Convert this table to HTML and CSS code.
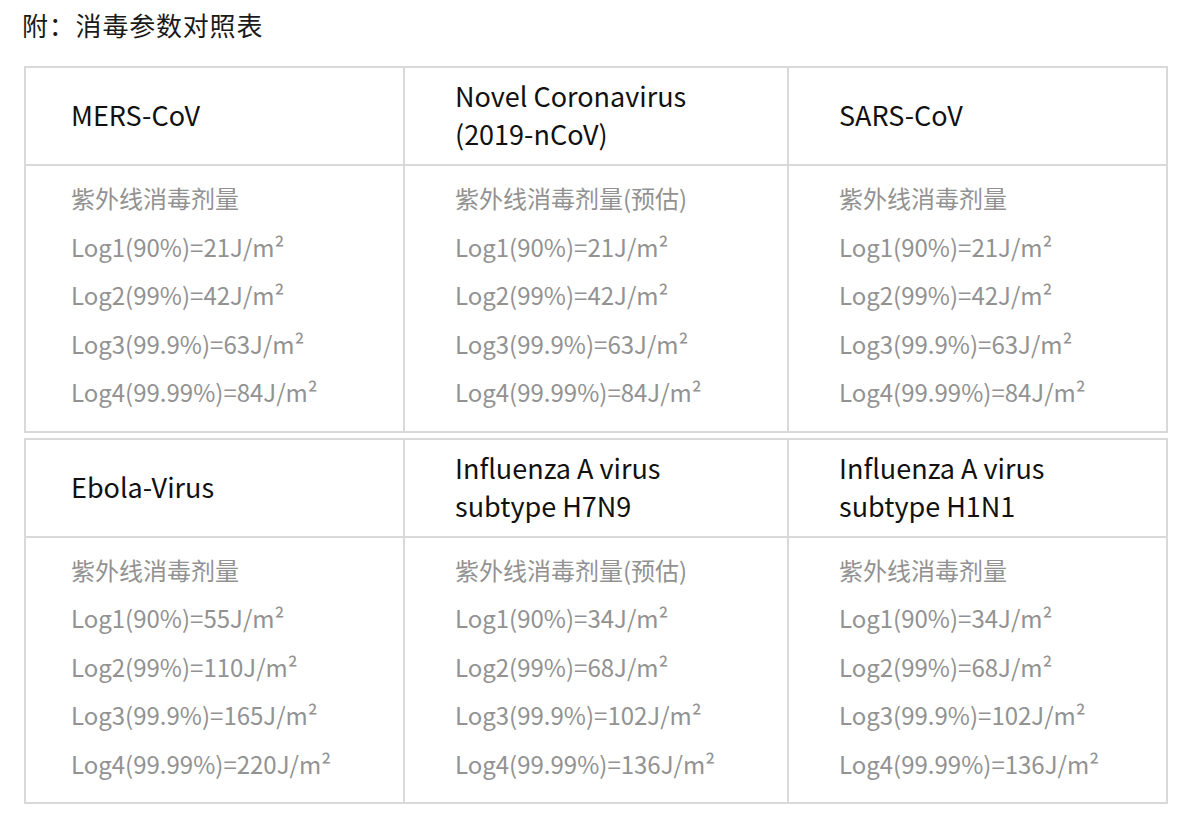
FILE: index.html
```html
<!DOCTYPE html>
<html lang="zh-CN">
<head>
<meta charset="utf-8">
<link rel="stylesheet" href="styles.css">
</head>
<body>
<h1 class="title">附：消毒参数对照表</h1>
<table class="grid">
  <colgroup><col class="c1"><col class="c2"><col class="c3"></colgroup>
  <tr class="head">
    <td class="p1">MERS-CoV</td>
    <td class="p2">Novel Coronavirus<br>(2019-nCoV)</td>
    <td class="p3">SARS-CoV</td>
  </tr>
  <tr class="body">
    <td class="p1"><p>紫外线消毒剂量</p><p>Log1(90%)=21J/m²</p><p>Log2(99%)=42J/m²</p><p>Log3(99.9%)=63J/m²</p><p>Log4(99.99%)=84J/m²</p></td>
    <td class="p2"><p>紫外线消毒剂量(预估)</p><p>Log1(90%)=21J/m²</p><p>Log2(99%)=42J/m²</p><p>Log3(99.9%)=63J/m²</p><p>Log4(99.99%)=84J/m²</p></td>
    <td class="p3"><p>紫外线消毒剂量</p><p>Log1(90%)=21J/m²</p><p>Log2(99%)=42J/m²</p><p>Log3(99.9%)=63J/m²</p><p>Log4(99.99%)=84J/m²</p></td>
  </tr>
</table>
<table class="grid">
  <colgroup><col class="c1"><col class="c2"><col class="c3"></colgroup>
  <tr class="head">
    <td class="p1">Ebola-Virus</td>
    <td class="p2">Influenza A virus<br>subtype H7N9</td>
    <td class="p3">Influenza A virus<br>subtype H1N1</td>
  </tr>
  <tr class="body">
    <td class="p1"><p>紫外线消毒剂量</p><p>Log1(90%)=55J/m²</p><p>Log2(99%)=110J/m²</p><p>Log3(99.9%)=165J/m²</p><p>Log4(99.99%)=220J/m²</p></td>
    <td class="p2"><p>紫外线消毒剂量(预估)</p><p>Log1(90%)=34J/m²</p><p>Log2(99%)=68J/m²</p><p>Log3(99.9%)=102J/m²</p><p>Log4(99.99%)=136J/m²</p></td>
    <td class="p3"><p>紫外线消毒剂量</p><p>Log1(90%)=34J/m²</p><p>Log2(99%)=68J/m²</p><p>Log3(99.9%)=102J/m²</p><p>Log4(99.99%)=136J/m²</p></td>
  </tr>
</table>
</body>
</html>
```
FILE: styles.css
```css
html, body {
  margin: 0;
  padding: 0;
  background: #ffffff;
}
body {
  font-family: "Noto Sans CJK SC", "Noto Sans", sans-serif;
  padding: 0 24px 0 24px;
  width: 1142px;
}
.title {
  margin: 0;
  padding-top: 7px;
  margin-left: -2px;
  height: 66px;
  box-sizing: border-box;
  font-size: 26px;
  line-height: 36px;
  font-weight: 400;
  letter-spacing: 0.8px;
  color: #1a1a1a;
}
.grid {
  width: 1142px;
  border-collapse: collapse;
  table-layout: fixed;
  border: 2px solid #d9d9d9;
  margin-bottom: 5px;
}
.c1 { width: 379px; }
.c2 { width: 384px; }
.c3 { width: 379px; }
.grid td {
  border: 2px solid #d9d9d9;
  vertical-align: middle;
}
.p1 { padding-left: 45px; }
.p2 { padding-left: 50px; }
.p3 { padding-left: 50px; }
.head td {
  height: 94px;
  font-size: 27px;
  line-height: 38px;
  color: #111111;
  padding-top: 0;
  padding-bottom: 2px;
}
.body td {
  padding-top: 8px;
  padding-bottom: 14px;
  font-size: 24px;
  font-weight: 400;
  color: #929292;
}
.body p {
  margin: 0;
  line-height: 48.5px;
}
```
